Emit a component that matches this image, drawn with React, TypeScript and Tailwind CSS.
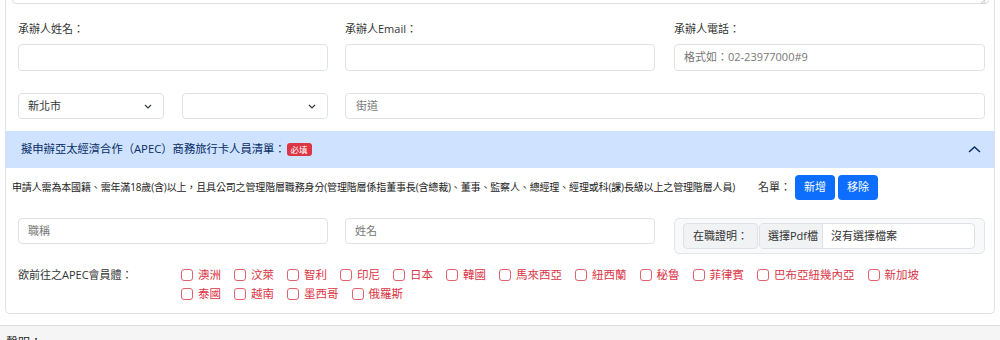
import React from "react";

const Chevron = () => (
  <svg width="8" height="5" viewBox="0 0 8 5" className="shrink-0">
    <polyline points="1,1 4,4 7,1" fill="none" stroke="#343a40" strokeWidth="1.2" />
  </svg>
);

const countries = ["澳洲", "汶萊", "智利", "印尼", "日本", "韓國", "馬來西亞", "紐西蘭", "秘魯", "菲律賓", "巴布亞紐幾內亞", "新加坡", "泰國", "越南", "墨西哥", "俄羅斯"];

export default function App() {
  return (
    <div className="w-[1000px] h-[340px] overflow-hidden bg-white text-[#333] font-['Open_Sans','Noto_Sans_CJK_TC',sans-serif]">
      <div className="ml-[5px] w-[990px] border border-t-0 border-[#dee2e6] rounded-b-[5px] pb-[10px]">
        {/* textarea bottom */}
        <div className="relative ml-[6px] mr-[5px] h-[4px] border border-t-0 border-[#dee2e6] rounded-b-[4px]">
          <svg width="6" height="4" viewBox="0 0 6 4" className="absolute right-[2px] top-0">
            <line x1="1" y1="3.5" x2="5" y2="0" stroke="#aaa" strokeWidth="0.8" />
            <line x1="3.5" y1="3.5" x2="5.5" y2="1.7" stroke="#aaa" strokeWidth="0.8" />
          </svg>
        </div>

        {/* contact row */}
        <div className="flex pl-[12px] mt-[17px] text-[11px]">
          <div className="w-[310px]">
            <div className="leading-[16px]">承辦人姓名：</div>
            <div className="mt-[7px] h-[27px] border border-[#dee2e6] rounded-[4px]" />
          </div>
          <div className="w-[310px] ml-[17px]">
            <div className="leading-[16px]">承辦人Email：</div>
            <div className="mt-[7px] h-[27px] border border-[#dee2e6] rounded-[4px]" />
          </div>
          <div className="w-[311px] ml-[19px]">
            <div className="leading-[16px]">承辦人電話：</div>
            <div className="mt-[7px] h-[27px] border border-[#dee2e6] rounded-[4px] flex items-center pl-[9px] text-[#777]">
              格式如：02-23977000#9
            </div>
          </div>
        </div>

        {/* address row */}
        <div className="flex pl-[12px] mt-[22px] text-[11px]">
          <div className="w-[146px] h-[26px] border border-[#dee2e6] rounded-[4px] flex items-center justify-between pl-[9px] pr-[11px]">
            <span>新北市</span>
            <Chevron />
          </div>
          <div className="w-[146px] ml-[18px] h-[26px] border border-[#dee2e6] rounded-[4px] flex items-center justify-end pr-[11px]">
            <Chevron />
          </div>
          <div className="w-[640px] ml-[17px] h-[26px] border border-[#dee2e6] rounded-[4px] flex items-center pl-[10px] text-[#777]">
            街道
          </div>
        </div>

        {/* accordion header */}
        <div className="mt-[12px] h-[37px] bg-[#cfe2ff] flex items-center justify-between pl-[15px] pr-[13px] text-[11.3px] text-[#052c65]">
          <div className="flex items-center">
            <span>擬申辦亞太經濟合作（APEC）商務旅行卡人員清單：</span>
            <span className="ml-[1px] h-[13px] px-[4px] bg-[#dc3545] text-white text-[8.5px] leading-[13px] rounded-[3px]">必填</span>
          </div>
          <svg width="13" height="7" viewBox="0 0 13 7">
            <polyline points="1,6 6.5,1 12,6" fill="none" stroke="#052c65" strokeWidth="1.4" />
          </svg>
        </div>

        {/* body row 1 */}
        <div className="flex items-center pl-[6px] mt-[7px] h-[25px]">
          <div className="w-[746px] text-[10px] text-[#222] tracking-[-0.15px] whitespace-nowrap">
            申請人需為本國籍、需年滿18歲(含)以上，且具公司之管理階層職務身分(管理階層係指董事長(含總裁)、董事、監察人、總經理、經理或科(課)長級以上之管理階層人員)
          </div>
          <span className="text-[11px] w-[37px]">名單：</span>
          <button className="w-[40px] h-[25px] bg-[#0d6efd] text-white text-[11px] rounded-[4px]">新增</button>
          <button className="ml-[3px] w-[40px] h-[25px] bg-[#0d6efd] text-white text-[11px] rounded-[4px]">移除</button>
        </div>

        {/* body row 2 */}
        <div className="flex items-start pl-[12px] mt-[18px] text-[11px]">
          <div className="w-[310px] h-[26px] border border-[#dee2e6] rounded-[4px] flex items-center pl-[9px] text-[#777]">職稱</div>
          <div className="w-[310px] ml-[17px] h-[26px] border border-[#dee2e6] rounded-[4px] flex items-center pl-[9px] text-[#777]">姓名</div>
          <div className="w-[311px] ml-[19px] h-[36px] bg-[#f8f9fa] border border-[#e3e6e9] rounded-[5px] flex items-center pl-[8px] pr-[9px]">
            <div className="w-[75px] h-[26px] bg-[#f1f2f4] border border-[#dee2e6] rounded-[4px] flex items-center pl-[9px]">在職證明：</div>
            <div className="ml-[1px] flex-1 h-[26px] bg-white border border-[#dee2e6] rounded-[4px] flex items-center overflow-hidden">
              <div className="h-full w-[63px] bg-[#f1f2f4] border-r border-[#dee2e6] flex items-center pl-[8px] whitespace-nowrap">選擇Pdf檔</div>
              <span className="ml-[8px]">沒有選擇檔案</span>
            </div>
          </div>
        </div>

        {/* checkboxes */}
        <div className="flex items-start pl-[12px] mt-[11px]">
          <div className="w-[163px] leading-[19px] text-[11px]">欲前往之APEC會員體：</div>
          <div className="w-[780px] flex flex-wrap text-[11.5px]">
            {countries.map((c) => (
              <div key={c} className="flex items-center h-[19px] mr-[13px]">
                <span className="w-[12px] h-[12px] border border-[#e4606d] rounded-[3px] bg-white" />
                <span className="ml-[5px] text-[#dc3545]">{c}</span>
              </div>
            ))}
          </div>
        </div>
      </div>

      {/* footer */}
      <div className="mt-[11px] border-t border-[#dcdcdc] bg-[#f5f5f5] h-[40px] pl-[6px] pt-[8px] text-[12px] text-[#222]">
        聲明：
      </div>
    </div>
  );
}
